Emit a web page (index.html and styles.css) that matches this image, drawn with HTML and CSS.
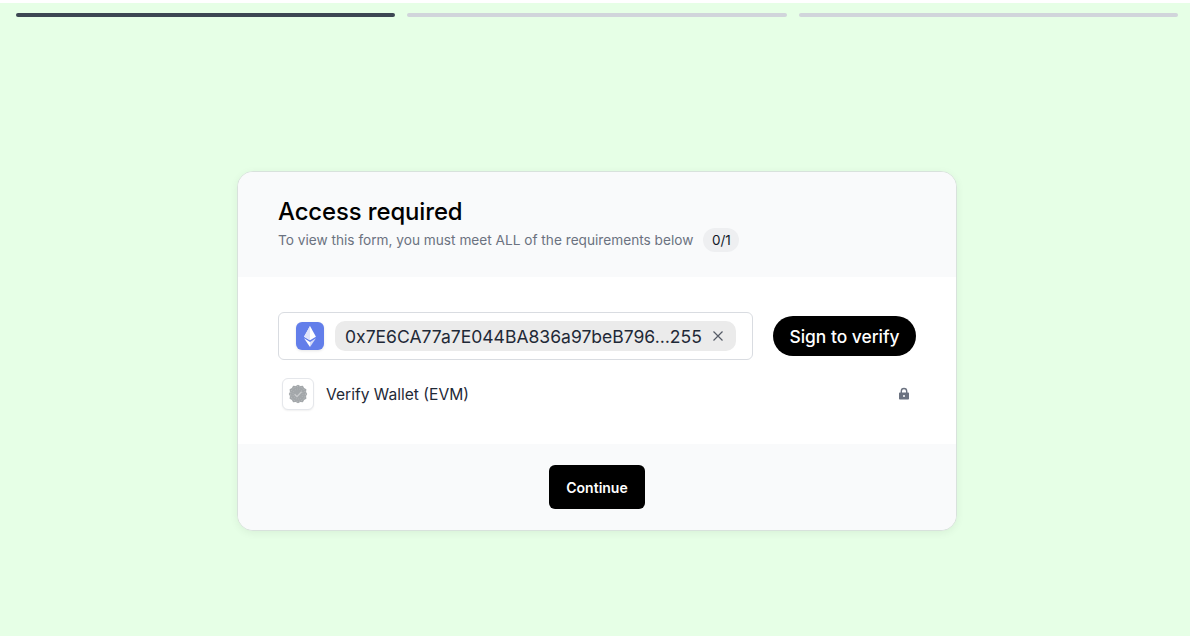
FILE: index.html
```html
<!DOCTYPE html>
<html lang="en">
<head>
<meta charset="utf-8">
<title>Access required</title>
<link rel="stylesheet" href="styles.css">
</head>
<body>
<div class="page">
  <div class="progress">
    <span class="seg seg-active"></span>
    <span class="seg"></span>
    <span class="seg"></span>
  </div>
  <main class="main">
    <section class="card">
      <header class="card-head">
        <h1 class="title">Access required</h1>
        <div class="sub-row">
          <p class="sub">To view this form, you must meet ALL of the requirements below</p>
          <span class="count">0/1</span>
        </div>
      </header>
      <div class="card-body">
        <div class="wallet-row">
          <div class="wallet-field">
            <span class="eth-badge">
              <svg class="eth-svg" viewBox="0 0 16 24" width="14" height="21" aria-hidden="true">
                <path d="M8 0 L14.8 12.2 L8 16.4 L1.2 12.2 Z" fill="#fff"/>
                <path d="M8 0 L8 16.4 L1.2 12.2 Z" fill="#dfe4fa"/>
                <path d="M8 18.2 L14.8 13.9 L8 24 Z" fill="#d5dcf8"/>
                <path d="M8 18.2 L1.2 13.9 L8 24 Z" fill="#fff"/>
              </svg>
            </span>
            <span class="chip">
              <span class="chip-text">0x7E6CA77a7E044BA836a97beB796…255</span>
              <svg class="chip-x" viewBox="0 0 12 12" width="12" height="12" aria-hidden="true">
                <path d="M1.5 1.5 L10.5 10.5 M10.5 1.5 L1.5 10.5" stroke="#555b66" stroke-width="1.2" fill="none"/>
              </svg>
            </span>
          </div>
          <button class="sign-btn" type="button">Sign to verify</button>
        </div>
        <div class="req-row">
          <span class="req-icon">
            <svg viewBox="0 0 20 20" width="20" height="20" aria-hidden="true">
              <path d="M10 .8l2.3 1.3 2.6-.3 1.2 2.3 2.3 1.2-.3 2.6L19.2 10l-1.1 2.1.3 2.6-2.3 1.2-1.2 2.3-2.6-.3L10 19.2l-2.3-1.3-2.6.3-1.2-2.3-2.3-1.2.3-2.6L.8 10l1.1-2.1-.3-2.6 2.3-1.2 1.2-2.3 2.6.3z" fill="#a3a7aa"/>
              <circle cx="10" cy="10" r="7.4" fill="none" stroke="#bfc2c4" stroke-width="1" stroke-dasharray="1 1.4"/>
              <circle cx="10" cy="10" r="5" fill="none" stroke="#b4b7ba" stroke-width="1" stroke-dasharray="1 1.2"/>
              <path d="M6.6 10.2l2.4 2.4L13.6 7.8" stroke="#c9cbcd" stroke-width="1.3" fill="none"/>
            </svg>
          </span>
          <span class="req-label">Verify Wallet (EVM)</span>
          <svg class="lock" viewBox="0 0 12 14" width="12" height="14" aria-hidden="true">
            <path d="M3.3 6V4.2a2.7 2.7 0 0 1 5.4 0V6" stroke="#6b7280" stroke-width="1.4" fill="none"/>
            <path fill-rule="evenodd" d="M1.8 5.6h8.4c.5 0 .8.3.8.8v5.3c0 .5-.3.8-.8.8H1.8c-.5 0-.8-.3-.8-.8V6.4c0-.5.3-.8.8-.8zM6 8a1 1 0 1 0 0 2 1 1 0 0 0 0-2z" fill="#6b7280"/>
          </svg>
        </div>
      </div>
      <footer class="card-foot">
        <button class="continue-btn" type="button">Continue</button>
      </footer>
    </section>
  </main>
</div>
</body>
</html>
```
FILE: styles.css
```css
* { box-sizing: border-box; }
html, body { height: 100%; margin: 0; }
body {
  background: #fff;
  font-family: "Inter", "Liberation Sans", sans-serif;
  overflow: hidden;
}
.page {
  height: 633px;
  margin-top: 3px;
  background: #e6ffe6;
  display: flex;
  flex-direction: column;
}
.progress {
  display: flex;
  gap: 12px;
  padding: 10px 12px 0 16px;
}
.seg {
  flex: 1;
  height: 4px;
  border-radius: 2px;
  background: #d1d5db;
}
.seg-active { background: #3d4753; }
.main {
  display: flex;
  justify-content: center;
  padding-top: 154px;
}
.card {
  width: 720px;
  height: 360px;
  margin-left: 4px;
  border: 1px solid #d8e2dc;
  border-radius: 16px;
  background: #fff;
  overflow: hidden;
  display: flex;
  flex-direction: column;
  box-shadow: 0 2px 8px rgba(0, 0, 0, .06);
}
.card-head {
  height: 105px;
  padding: 27px 40px 0;
  background: #f9fafb;
}
.title {
  margin: 0;
  font-size: 23.9px;
  line-height: 26px;
  font-weight: 500;
  color: #000;
  letter-spacing: -.1px;
}
.sub-row {
  display: flex;
  align-items: center;
  gap: 10px;
  margin-top: 2px;
}
.sub {
  margin: 1px 0 0;
  font-size: 13.67px;
  line-height: 24px;
  color: #6b7280;
}
.count {
  width: 36px;
  height: 24px;
  border-radius: 12px;
  background: #eeeff1;
  color: #111827;
  font-size: 13.5px;
  line-height: 24px;
  text-align: center;
}
.card-body {
  flex: 1;
  padding: 35px 40px 0;
}
.wallet-row {
  display: flex;
  align-items: center;
  gap: 20px;
}
.wallet-field {
  width: 475px;
  height: 48px;
  display: flex;
  align-items: center;
  gap: 11px;
  padding: 0 16px 0 17px;
  border: 1px solid #d9dce1;
  border-radius: 6px;
}
.eth-badge {
  width: 28px;
  height: 28px;
  flex: none;
  display: flex;
  align-items: center;
  justify-content: center;
  border-radius: 6px;
  background: #627eea;
  box-shadow: 0 1px 3px rgba(0, 0, 0, .1);
}
.chip {
  height: 30px;
  width: 401px;
  display: flex;
  align-items: center;
  justify-content: space-between;
  padding: 0 12px 0 10px;
  border-radius: 10px;
  background: #ebebeb;
}
.chip-text {
  font-size: 17.55px;
  color: #1f2937;
  white-space: nowrap;
}
.chip-x { flex: none; }
.sign-btn {
  height: 40px;
  width: 143px;
  border: 0;
  border-radius: 20px;
  background: #000;
  color: #fff;
  font: 500 17.4px "Inter", "Liberation Sans", sans-serif;
  padding: 0;
}
.req-row {
  display: flex;
  align-items: center;
  margin-top: 18px;
  padding: 0 6px 0 4px;
}
.req-icon {
  width: 32px;
  height: 32px;
  flex: none;
  display: flex;
  align-items: center;
  justify-content: center;
  border: 1px solid #e5e7eb;
  border-radius: 6px;
  background: #fff;
  box-shadow: 0 1px 2px rgba(0, 0, 0, .06);
}
.req-label {
  flex: 1;
  margin-left: 12px;
  font-size: 15.6px;
  color: #1f2937;
}
.lock { flex: none; }
.card-foot {
  height: 86px;
  display: flex;
  align-items: flex-start;
  justify-content: center;
  padding-top: 21px;
  background: #f9fafb;
}
.continue-btn {
  width: 96px;
  height: 44px;
  border: 0;
  border-radius: 6px;
  background: #000;
  color: #fff;
  font: 600 14px "Inter", "Liberation Sans", sans-serif;
  padding: 0;
}
```
